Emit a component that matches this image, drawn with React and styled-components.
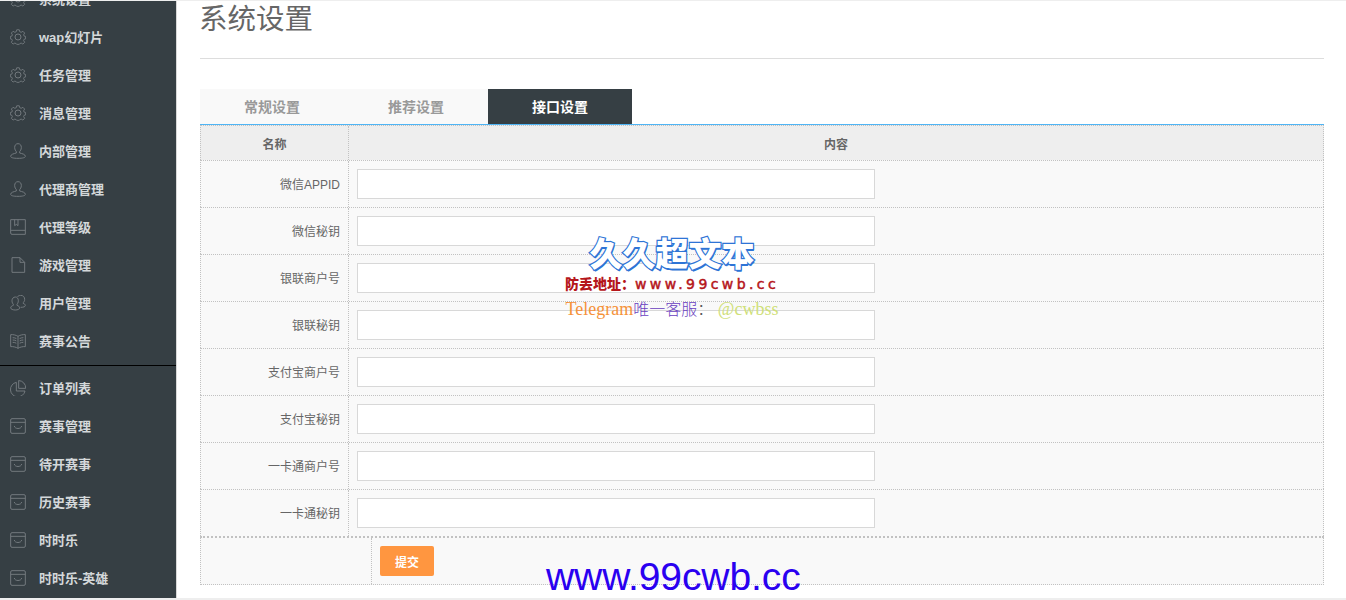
import React from "react";
import styled, { createGlobalStyle } from "styled-components";

const Global = createGlobalStyle`
  html, body { margin: 0; padding: 0; background: #fff; }
  body { font-family: "Liberation Sans", "Noto Sans CJK SC", sans-serif; }
  * { box-sizing: border-box; }
`;
const Page = styled.div`
  position: relative; width: 1346px; height: 600px; overflow: hidden; display: flex;
  border-top: 1px solid #eee; border-bottom: 2px solid #eee; background: #fff;
`;
const Side = styled.nav`
  width: 177px; flex: none; height: 597px; overflow: hidden; background: #363f44;
  border-right: 1px solid #d8d8d8;
`;
const Items = styled.div`margin-top: -21px;`;
const Item = styled.div`
  height: 38px; display: flex; align-items: center; padding-left: 10px; gap: 13px;
  color: #d4d8da; font-size: 13px; font-weight: 700; white-space: nowrap;
  svg { flex: none; width: 16px; height: 16px; fill: none; stroke: #767d81; stroke-width: 1.4; }
`;
const ItemText = styled.span`padding-bottom: 1px;`;
const Divider = styled.div`height: 1px; background: #000; margin: 5px 0 3px; `;
const Main = styled.main`flex: 1; padding: 0 22px 0 23px; min-width: 0;`;
const Title = styled.h1`
  margin: 0; height: 58px; border-bottom: 1px solid #ddd; font-size: 28.5px; font-weight: 400; color: #666;
  line-height: 36px; text-indent: -1px;
`;
const Tabs = styled.div`display: flex; margin-top: 30px; height: 35px;`;
const Tab = styled.div`
  width: 144px; display: flex; align-items: center; justify-content: center; font-size: 14px; font-weight: 700; padding-bottom: 2px;
  background: ${p => p.$active ? "#363f44" : "#f9f9f9"}; color: ${p => p.$active ? "#fff" : "#999"};
`;
const Panel = styled.div`border-top: 1px solid #4fb5f5;`;
const Row = styled.div`
  display: flex; height: ${p => p.$h}px; background: ${p => p.$head ? "#eee" : "#f9f9f9"};
  border: 1px dotted #c2c2c2; border-bottom: ${p => p.$last ? "1px dotted #c2c2c2" : "0"};
  border-top-width: ${p => p.$last ? 2 : 1}px;
`;
const Name = styled.div`
  width: ${p => p.$w || 148}px; flex: none; border-right: 1px dotted #c2c2c2; display: flex; align-items: center;
  justify-content: ${p => p.$center ? "center" : "flex-end"}; padding-right: ${p => p.$center ? 0 : 8}px;
  padding-bottom: ${p => p.$center ? 0 : 2}px;
  font-size: 12px; color: #666; font-weight: ${p => p.$center ? 700 : 400};
`;
const Content = styled.div`
  flex: 1; display: flex; align-items: center; padding-left: ${p => p.$pad ?? 8}px; justify-content: ${p => p.$center ? "center" : "flex-start"};
  font-size: 12px; color: #666; font-weight: ${p => p.$center ? 700 : 400};
`;
const Field = styled.input`
  width: 518px; height: 30px; border: 1px solid #d8d8d8; background: #fff; outline: 0; padding: 0;
`;
const Submit = styled.button`
  width: 54px; height: 30px; background: #ff9640; border: 0; border-radius: 2px; color: #fff; font: 700 12px "Liberation Sans", "Noto Sans CJK SC", sans-serif; padding: 0;
`;
const Mark = styled.div`
  position: absolute; left: 537px; top: 229px; width: 270px; display: flex; flex-direction: column; align-items: center; pointer-events: none;
`;
const Logo = styled.div`
  font-size: 33px; line-height: 44px; font-weight: 900; color: #fff; white-space: nowrap;
  -webkit-text-stroke: 2.4px #2e74d6; paint-order: stroke fill; font-family: "Noto Sans CJK SC", sans-serif;
  text-shadow: 1px 2px 0 #2e74d6;
`;
const Guard = styled.div`
  font-size: 14px; line-height: 20px; color: #b5161b; font-weight: 900; white-space: nowrap; margin-top: -1px; font-family: "Noto Sans CJK SC", sans-serif;
  span { font-family: "DejaVu Sans", sans-serif; letter-spacing: 3.4px; font-size: 14px; font-weight: 400; -webkit-text-stroke: .5px #b5161b; }
`;
const Tele = styled.div`
  margin-top: 5px; font-size: 18px; line-height: 20px; white-space: nowrap; font-family: "Liberation Serif", "Noto Sans CJK SC", serif; font-weight: 300;
`;
const Grad = styled.span`
  color: ${p => p.$c}; font-size: ${p => p.$s || 18}px;
`;
const Url = styled.div`
  position: absolute; left: 546px; top: 553px; font-size: 39px; line-height: 46px; letter-spacing: -0.1px; color: #2a00f0; white-space: nowrap; font-family: "Liberation Sans", sans-serif;
`;

const Gear = () => <svg viewBox="0 0 24 24"><path d="M10 1h4l.7 3 2.300 1 2.700-1.600 2.800 2.800L20.900 9l.8 2 2.300.6v3.800l-2.300.6-.8 2 1.600 2.800-2.800 2.800-2.700-1.600-2.300 1-.7 1h-4l-.7-1-2.300-1-2.700 1.600-2.800-2.800L3.100 18l-.8-2L0 15.400v-3.800L2.300 11l.8-2L1.500 6.200l2.800-2.800L7 5l2.300-1z" transform="translate(.6 .2) scale(.95)"/><circle cx="12" cy="12" r="4.500"/></svg>;
const User = () => <svg viewBox="0 0 24 24"><path d="M12 1c3.300 0 5 2.400 5 5.800 0 3-1.500 5-2.500 6.200v2c3.500 1 8.500 1.800 8.500 5 0 2-4 3-11 3S1 22 1 20c0-3.200 5-4 8.500-5v-2C8.500 11.800 7 9.800 7 6.800 7 3.400 8.700 1 12 1z"/></svg>;
const Book = () => <svg viewBox="0 0 24 24"><path d="M1 1h22v22H3a2 2 0 0 1-2-2zM1 18.500a1.500 1.500 0 0 1 1.500-1.500H23M7 1v9l2.500-2 2.500 2V1"/></svg>;
const File = () => <svg viewBox="0 0 24 24"><path d="M3 1h12l7 7v15H3zM15 1v7h7"/></svg>;
const Users = () => <svg viewBox="0 0 24 24"><path d="M8 3c3 0 4.500 2.500 4.500 5.500 0 2.500-1 4.500-2 5.500v1.500c2 .7 4 1.800 4 3.800 0 2-3 3.200-6.500 3.200S1 21.300 1 19.300c0-2 2-3.100 4-3.800V14c-1-1-2-3-2-5.500C3 5.500 5 3 8 3zM11 3c1-1.500 3-2.500 5-2.500 4 0 6 2.800 6 6 0 2.500-1 4-2.300 5v1c1.800.8 3.300 1.500 3.300 3.200 0 1.800-2.500 2.800-7 2.800"/></svg>;
const Open = () => <svg viewBox="0 0 24 24"><path d="M12 5C9 3 4 2 1 2.500v18c3-.5 8 .5 11 2.500 3-2 8-3 11-2.500v-18C20 2 15 3 12 5zM12 5v18M4 7c2 0 4 .5 5.500 1.300M4 10.500c2 0 4 .5 5.500 1.300M4 14c2 0 4 .5 5.500 1.300M20 7c-2 0-4 .5-5.500 1.300M20 10.500c-2 0-4 .5-5.500 1.300M20 14c-2 0-4 .5-5.500 1.300"/></svg>;
const Pie = () => <svg viewBox="0 0 24 24"><path d="M9.500 3.500a11 11 0 1 0 13 13H9.500zM13 .8A11 11 0 0 1 23.500 12.500H13z"/></svg>;
const Bag = () => <svg viewBox="0 0 24 24"><rect x="1" y="1" width="22" height="22" rx="2"/><path d="M1 6.500h22M6.500 12c.5 5 10.500 5 11 0"/></svg>;

const top = [["系统设置",Gear],["wap幻灯片",Gear],["任务管理",Gear],["消息管理",Gear],["内部管理",User],["代理商管理",User],["代理等级",Book],["游戏管理",File],["用户管理",Users],["赛事公告",Open]];
const bottom = [["订单列表",Pie],["赛事管理",Bag],["待开赛事",Bag],["历史赛事",Bag],["时时乐",Bag],["时时乐-英雄",Bag]];
const rows = ["微信APPID","微信秘钥","银联商户号","银联秘钥","支付宝商户号","支付宝秘钥","一卡通商户号","一卡通秘钥"];

export default function App() {
  const nav = ([t, I]) => <Item key={t}><I /><ItemText>{t}</ItemText></Item>;
  return (
    <Page>
      <Global />
      <Side><Items>{top.map(nav)}<Divider />{bottom.map(nav)}</Items></Side>
      <Main>
        <Title>系统设置</Title>
        <Tabs>
          <Tab>常规设置</Tab><Tab>推荐设置</Tab><Tab $active>接口设置</Tab>
        </Tabs>
        <Panel>
          <Row $head $h={35}><Name $center>名称</Name><Content $center $pad={0}>内容</Content></Row>
          {rows.map(r => <Row key={r} $h={47}><Name>{r}</Name><Content><Field /></Content></Row>)}
          <Row $h={49} $last><Name $w={171} /><Content><Submit>提交</Submit></Content></Row>
        </Panel>
      </Main>
      <Mark>
        <Logo>久久超文本</Logo>
        <Guard>防丢地址：<span>www.99cwb.cc</span></Guard>
        <Tele><Grad $c="#f5923a">Telegram</Grad><Grad $c="#6a3fc0" $s={16}>唯一客服</Grad><Grad $c="#555" $s={16}>：</Grad> <Grad $c="#cfe07a">@cwbss</Grad></Tele>
      </Mark>
      <Url>www.99cwb.cc</Url>
    </Page>
  );
}
